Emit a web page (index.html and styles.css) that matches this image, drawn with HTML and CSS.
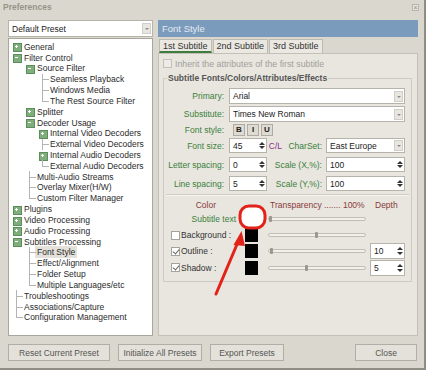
FILE: index.html
```html
<!DOCTYPE html>
<html>
<head>
<meta charset="utf-8">
<link rel="stylesheet" href="styles.css">
</head>
<body>
<div class="window">
  <div class="titlebar">
    <span class="title">Preferences</span>
    <span class="close">×</span>
  </div>
  <div class="main">
    <div class="left">
      <div class="combo preset"><span class="val">Default Preset</span><span class="drop"></span></div>
      <div class="tree">
        <div class="row"><span class="cn p"></span><span class="tx">General</span></div>
        <div class="row"><span class="cn m"></span><span class="tx">Filter Control</span></div>
        <div class="row l1"><span class="cn m"></span><span class="tx">Source Filter</span></div>
        <div class="row l2"><span class="cn t"></span><span class="tx">Seamless Playback</span></div>
        <div class="row l2"><span class="cn t"></span><span class="tx">Windows Media</span></div>
        <div class="row l2"><span class="cn l"></span><span class="tx">The Rest Source Filter</span></div>
        <div class="row l1"><span class="cn p"></span><span class="tx">Splitter</span></div>
        <div class="row l1"><span class="cn m"></span><span class="tx">Decoder Usage</span></div>
        <div class="row l2"><span class="cn p"></span><span class="tx">Internal Video Decoders</span></div>
        <div class="row l2"><span class="cn t"></span><span class="tx">External Video Decoders</span></div>
        <div class="row l2"><span class="cn p"></span><span class="tx">Internal Audio Decoders</span></div>
        <div class="row l2"><span class="cn l"></span><span class="tx">External Audio Decoders</span></div>
        <div class="row l1"><span class="cn t"></span><span class="tx">Multi-Audio Streams</span></div>
        <div class="row l1"><span class="cn t"></span><span class="tx">Overlay Mixer(H/W)</span></div>
        <div class="row l1"><span class="cn l"></span><span class="tx">Custom Filter Manager</span></div>
        <div class="row"><span class="cn p"></span><span class="tx">Plugins</span></div>
        <div class="row"><span class="cn p"></span><span class="tx">Video Processing</span></div>
        <div class="row"><span class="cn p"></span><span class="tx">Audio Processing</span></div>
        <div class="row"><span class="cn m"></span><span class="tx">Subtitles Processing</span></div>
        <div class="row l1"><span class="cn t"></span><span class="tx sel">Font Style</span></div>
        <div class="row l1"><span class="cn t"></span><span class="tx">Effect/Alignment</span></div>
        <div class="row l1"><span class="cn t"></span><span class="tx">Folder Setup</span></div>
        <div class="row l1"><span class="cn l"></span><span class="tx">Multiple Languages/etc</span></div>
        <div class="row"><span class="cn t"></span><span class="tx">Troubleshootings</span></div>
        <div class="row"><span class="cn t"></span><span class="tx">Associations/Capture</span></div>
        <div class="row"><span class="cn l"></span><span class="tx">Configuration Management</span></div>
      </div>
    </div>
    <div class="right">
      <div class="header">Font Style</div>
      <div class="tabs">
        <div class="tab sel">1st Subtitle</div>
        <div class="tab">2nd Subtitle</div>
        <div class="tab">3rd Subtitle</div>
      </div>
      <div class="panel">
        <div class="inherit"><span class="chk"></span><span class="dis">Inherit the attributes of the first subtitle</span></div>
        <fieldset class="group">
          <legend>Subtitle Fonts/Colors/Attributes/Effects</legend>
          <div class="frow r1"><span class="lbl">Primary:</span><div class="combo wide"><span class="val">Arial</span><span class="drop"></span></div></div>
          <div class="frow r2"><span class="lbl">Substitute:</span><div class="combo wide"><span class="val">Times New Roman</span><span class="drop"></span></div></div>
          <div class="frow r3"><span class="lbl">Font style:</span><div class="bius"><span class="sb">B</span><span class="sb">I</span><span class="sb">U</span></div></div>
          <div class="frow r4"><span class="lbl">Font size:</span><div class="spin s1"><span class="val">45</span><span class="arr"></span></div><span class="mid"><span class="cl">C/L</span> CharSet:</span><div class="combo narrow"><span class="val">East Europe</span><span class="drop"></span></div></div>
          <div class="frow r5"><span class="lbl">Letter spacing:</span><div class="spin s1"><span class="val">0</span><span class="arr"></span></div><span class="mid">Scale (X,%):</span><div class="spin narrow"><span class="val">100</span><span class="arr"></span></div></div>
          <div class="frow r6"><span class="lbl">Line spacing:</span><div class="spin s1"><span class="val">5</span><span class="arr"></span></div><span class="mid">Scale (Y,%):</span><div class="spin narrow"><span class="val">100</span><span class="arr"></span></div></div>
          <div class="sep"></div>
          <div class="colors">
            <span class="ch c-color">Color</span><span></span><span class="ch c-tr">Transparency ....... 100%</span><span></span><span class="ch c-depth">Depth</span>

            <span class="clbl green">Subtitle text</span><span class="sw white"></span><span class="slider"><span class="thumb" style="left:0px"></span></span><span></span><span></span>

            <span class="clbl"><span class="chk"></span>Background :</span><span class="sw"></span><span class="slider"><span class="thumb" style="left:46px"></span></span><span></span><span></span>

            <span class="clbl"><span class="chk on"></span>Outline :</span><span class="sw"></span><span class="slider"><span class="thumb" style="left:1px"></span></span><span></span><div class="spin cs"><span class="val">10</span><span class="arr"></span></div>

            <span class="clbl"><span class="chk on"></span>Shadow :</span><span class="sw"></span><span class="slider"><span class="thumb" style="left:36px"></span></span><span></span><div class="spin cs"><span class="val">5</span><span class="arr"></span></div>
          </div>
        </fieldset>
      </div>
    </div>
  </div>
  <div class="footer">
    <button class="btn b1">Reset Current Preset</button>
    <button class="btn b2">Initialize All Presets</button>
    <button class="btn b3">Export Presets</button>
    <button class="btn b4">Close</button>
  </div>
  <svg class="annot" width="426" height="370" viewBox="0 0 426 370">
    <rect x="240" y="206" width="25" height="22" rx="9" ry="9" fill="#ffffff" stroke="#e2231a" stroke-width="3"/>
    <line x1="216" y1="294" x2="238" y2="242" stroke="#e2231a" stroke-width="3" stroke-linecap="round"/>
    <polygon points="241.5,231 233.5,245 245,246" fill="#e2231a"/>
  </svg>
</div>
</body>
</html>
```

FILE: styles.css
```css
* { box-sizing: border-box; }
html, body { margin: 0; padding: 0; }
body {
  width: 426px; height: 370px; overflow: hidden;
  background: #dad8ce;
  font-family: "Liberation Sans", Arial, sans-serif;
  font-size: 8.5px;
  color: #2b2b2b;
}
.window {
  position: relative;
  width: 426px; height: 370px;
  display: flex; flex-direction: column;
  border-right: 2px solid #8f8d84;
  border-bottom: 2px solid #8f8d84;
}
.titlebar {
  height: 20px;
  display: flex; justify-content: space-between; align-items: flex-start;
  padding: 2px 5px 0 3px;
  line-height: 10px;
}
.title { font-weight: bold; color: #96948a; }
.close {
  width: 7px; height: 7px; margin-top: 2px;
  border: 1px solid #b8b6ac; background: #e6e4dc;
  color: #8a887e; font-size: 7px; line-height: 5px; text-align: center;
}
.main {
  display: flex; gap: 5px;
  padding: 0 6px 0 8px;
  height: 316px;
}
.left { width: 145px; display: flex; flex-direction: column; gap: 1px; }
.combo, .spin {
  position: relative;
  background: #fff;
  border: 1px solid #b6b4aa;
  display: flex; align-items: center;
}
.combo .val, .spin .val { padding-left: 3px; flex: 1; white-space: nowrap; color: #222; }
.drop {
  width: 9px; height: 11px; margin-right: 1px;
  background: #e8e6e0; border: 1px solid #d0cec6;
  position: relative;
}
.drop::after {
  content: ""; position: absolute; left: 2px; top: 4px;
  border-left: 2px solid transparent; border-right: 2px solid transparent;
  border-top: 2px solid #8a8a8a;
}
.preset { height: 17px; }
.tree {
  flex: 1;
  background: #fff;
  border: 1px solid #a9a79d;
  padding: 2.3px 0 0 1px;
}
.row { height: 10.84px; display: flex; align-items: center; white-space: nowrap; }
.row.l1 { padding-left: 13px; }
.row.l2 { padding-left: 26px; }
.cn { width: 13px; height: 100%; position: relative; flex: none; }
.cn.t::before, .cn.l::before {
  content: ""; position: absolute; left: 6px; top: 0; bottom: 0; width: 1px; background: #b4b4b4;
}
.cn.l::before { bottom: 50%; }
.cn.t::after, .cn.l::after {
  content: ""; position: absolute; left: 6px; top: 50%; width: 7px; height: 1px; background: #b4b4b4;
}
.cn.p::before, .cn.m::before {
  content: ""; position: absolute; left: 3px; top: 2px; width: 7px; height: 7px;
  background: #7fae7c; border: 1px solid #5d8d5a;
}
.cn.p::after, .cn.m::after {
  content: ""; position: absolute; left: 4px; top: 3px; width: 5px; height: 5px;
  background: linear-gradient(#fff, #fff) center / 3px 1px no-repeat;
}
.cn.p::after {
  background:
    linear-gradient(#fff, #fff) center / 3px 1px no-repeat,
    linear-gradient(#fff, #fff) center / 1px 3px no-repeat;
}
.tx { padding-left: 1px; color: #2a2a2a; }
.tx.sel { background: #e3e1d9; padding: 1px 2px; margin-left: -1px; }

.right { flex: 1; display: flex; flex-direction: column; }
.header {
  height: 17px; background: #7b9bbc; color: #e3eaf2;
  font-size: 9.5px; line-height: 17px; padding-left: 4px;
}
.tabs { display: flex; gap: 1px; height: 16px; padding: 2px 0 0 1px; }
.tab {
  height: 14px; padding: 0 3px;
  border: 1px solid #bdbbb1; border-bottom: none;
  background: #eae8e1; color: #333;
  font-size: 9px; line-height: 13px;
}
.tab.sel { border-bottom: 2px solid #3f7c3f; line-height: 12px; }
.panel {
  flex: 1;
  background: #e8e6df;
  border: 1px solid #c3c1b7;
  padding: 5px 5px 0 4px;
}
.inherit { display: flex; align-items: center; height: 9px; gap: 3px; }
.chk {
  width: 9px; height: 9px; flex: none; background: #fff;
  border: 1px solid #a6a49a; position: relative; display: inline-block;
}
.chk.on::after {
  content: ""; position: absolute; left: 2px; top: 0px; width: 3px; height: 5px;
  border-right: 1px solid #666; border-bottom: 1px solid #666; transform: rotate(40deg);
}
.inherit .chk { border-color: #c2c0b8; background: #ecebe6; }
.dis { color: #a2a09a; font-size: 8.8px; }
.group {
  margin: 5px 0 0 0; padding: 0 0 4px 0; min-width: 0;
  border: 1px solid #cdcbc1;
  height: 209px;
}
.group legend {
  margin-left: 3px; padding: 0 1px;
  font-weight: bold; color: #555; font-size: 8.5px;
}
.frow { display: flex; align-items: center; }
.lbl { width: 60px; text-align: right; margin-right: 5px; color: #3b7f3b; white-space: nowrap; flex: none; }
.r1 { margin-top: 5px; }
.r1, .r2 { height: 16px; }
.r2 { margin-top: 2px; }
.r3 { margin-top: 1px; height: 13px; }
.r4 { margin-top: 2px; height: 15px; }
.r5 { margin-top: 4px; height: 15px; }
.r6 { margin-top: 4px; height: 15px; }
.combo.wide { width: 176px; height: 16px; }
.combo.narrow, .spin.narrow { width: 79px; height: 15px; }
.bius { display: flex; gap: 2px; margin-left: 4px; }
.sb {
  width: 12px; height: 12px; background: #dddbd2; border: 1px solid #aeaca2;
  font-weight: bold; text-align: center; line-height: 10px; font-size: 8px; color: #222;
}
.spin.s1 { width: 38px; height: 15px; }
.arr { width: 8px; height: 100%; position: relative; flex: none; }
.arr::before, .arr::after {
  content: ""; position: absolute; left: 1px;
  border-left: 3px solid transparent; border-right: 3px solid transparent;
}
.arr::before { top: 3px; border-bottom: 3px solid #333; }
.arr::after { bottom: 3px; border-top: 3px solid #333; }
.mid { width: 55px; text-align: right; margin-right: 4px; color: #3b7f3b; white-space: nowrap; flex: none; }
.cl { color: #8b2f8b; margin-right: 4px; }
.sep { margin: 3px 2px 0 2px; height: 2px; border-top: 1px solid #cfcdc3; border-bottom: 1px solid #f6f5f0; }
.colors {
  display: grid;
  grid-template-columns: 70px 27px 98px 4px 35px;
  grid-template-rows: 12px 16px 16px 16px 17px;
  padding-left: 7px; margin-top: 3px;
  align-items: center;
}
.ch { color: #8a3a3a; white-space: nowrap; }
.c-color { text-align: right; padding-right: 25px; }
.c-tr { padding-left: 2px; }
.c-depth { padding-left: 5px; }
.clbl { display: flex; align-items: center; gap: 1px; color: #333; white-space: nowrap; }
.clbl.green { color: #3b7f3b; justify-content: flex-end; padding-right: 5px; }
.sw { width: 13px; height: 14px; background: #000; margin-left: 4px; }
.sw.white { background: #fff; }
.slider {
  position: relative; height: 4px;
  background: #f1f0ec; border: 1px solid #c0beb4; border-radius: 2px;
}
.thumb {
  position: absolute; top: -2px; width: 3px; height: 6px;
  background: #9a988e; border-radius: 1px;
}
.spin.cs { width: 35px; height: 16px; }
.footer { display: flex; gap: 8px; padding: 8px 7px 0 8px; }
.btn {
  height: 17px; padding: 0;
  background: #e3e1d9; border: 1px solid #b1afa5;
  font-family: "Liberation Sans", Arial, sans-serif;
  font-size: 8.5px; color: #555;
}
.b1 { width: 102px; }
.b2 { width: 84px; }
.b3 { width: 74px; }
.b4 { width: 62px; margin-left: auto; }
.annot { position: absolute; left: 0; top: 0; pointer-events: none; }
```
